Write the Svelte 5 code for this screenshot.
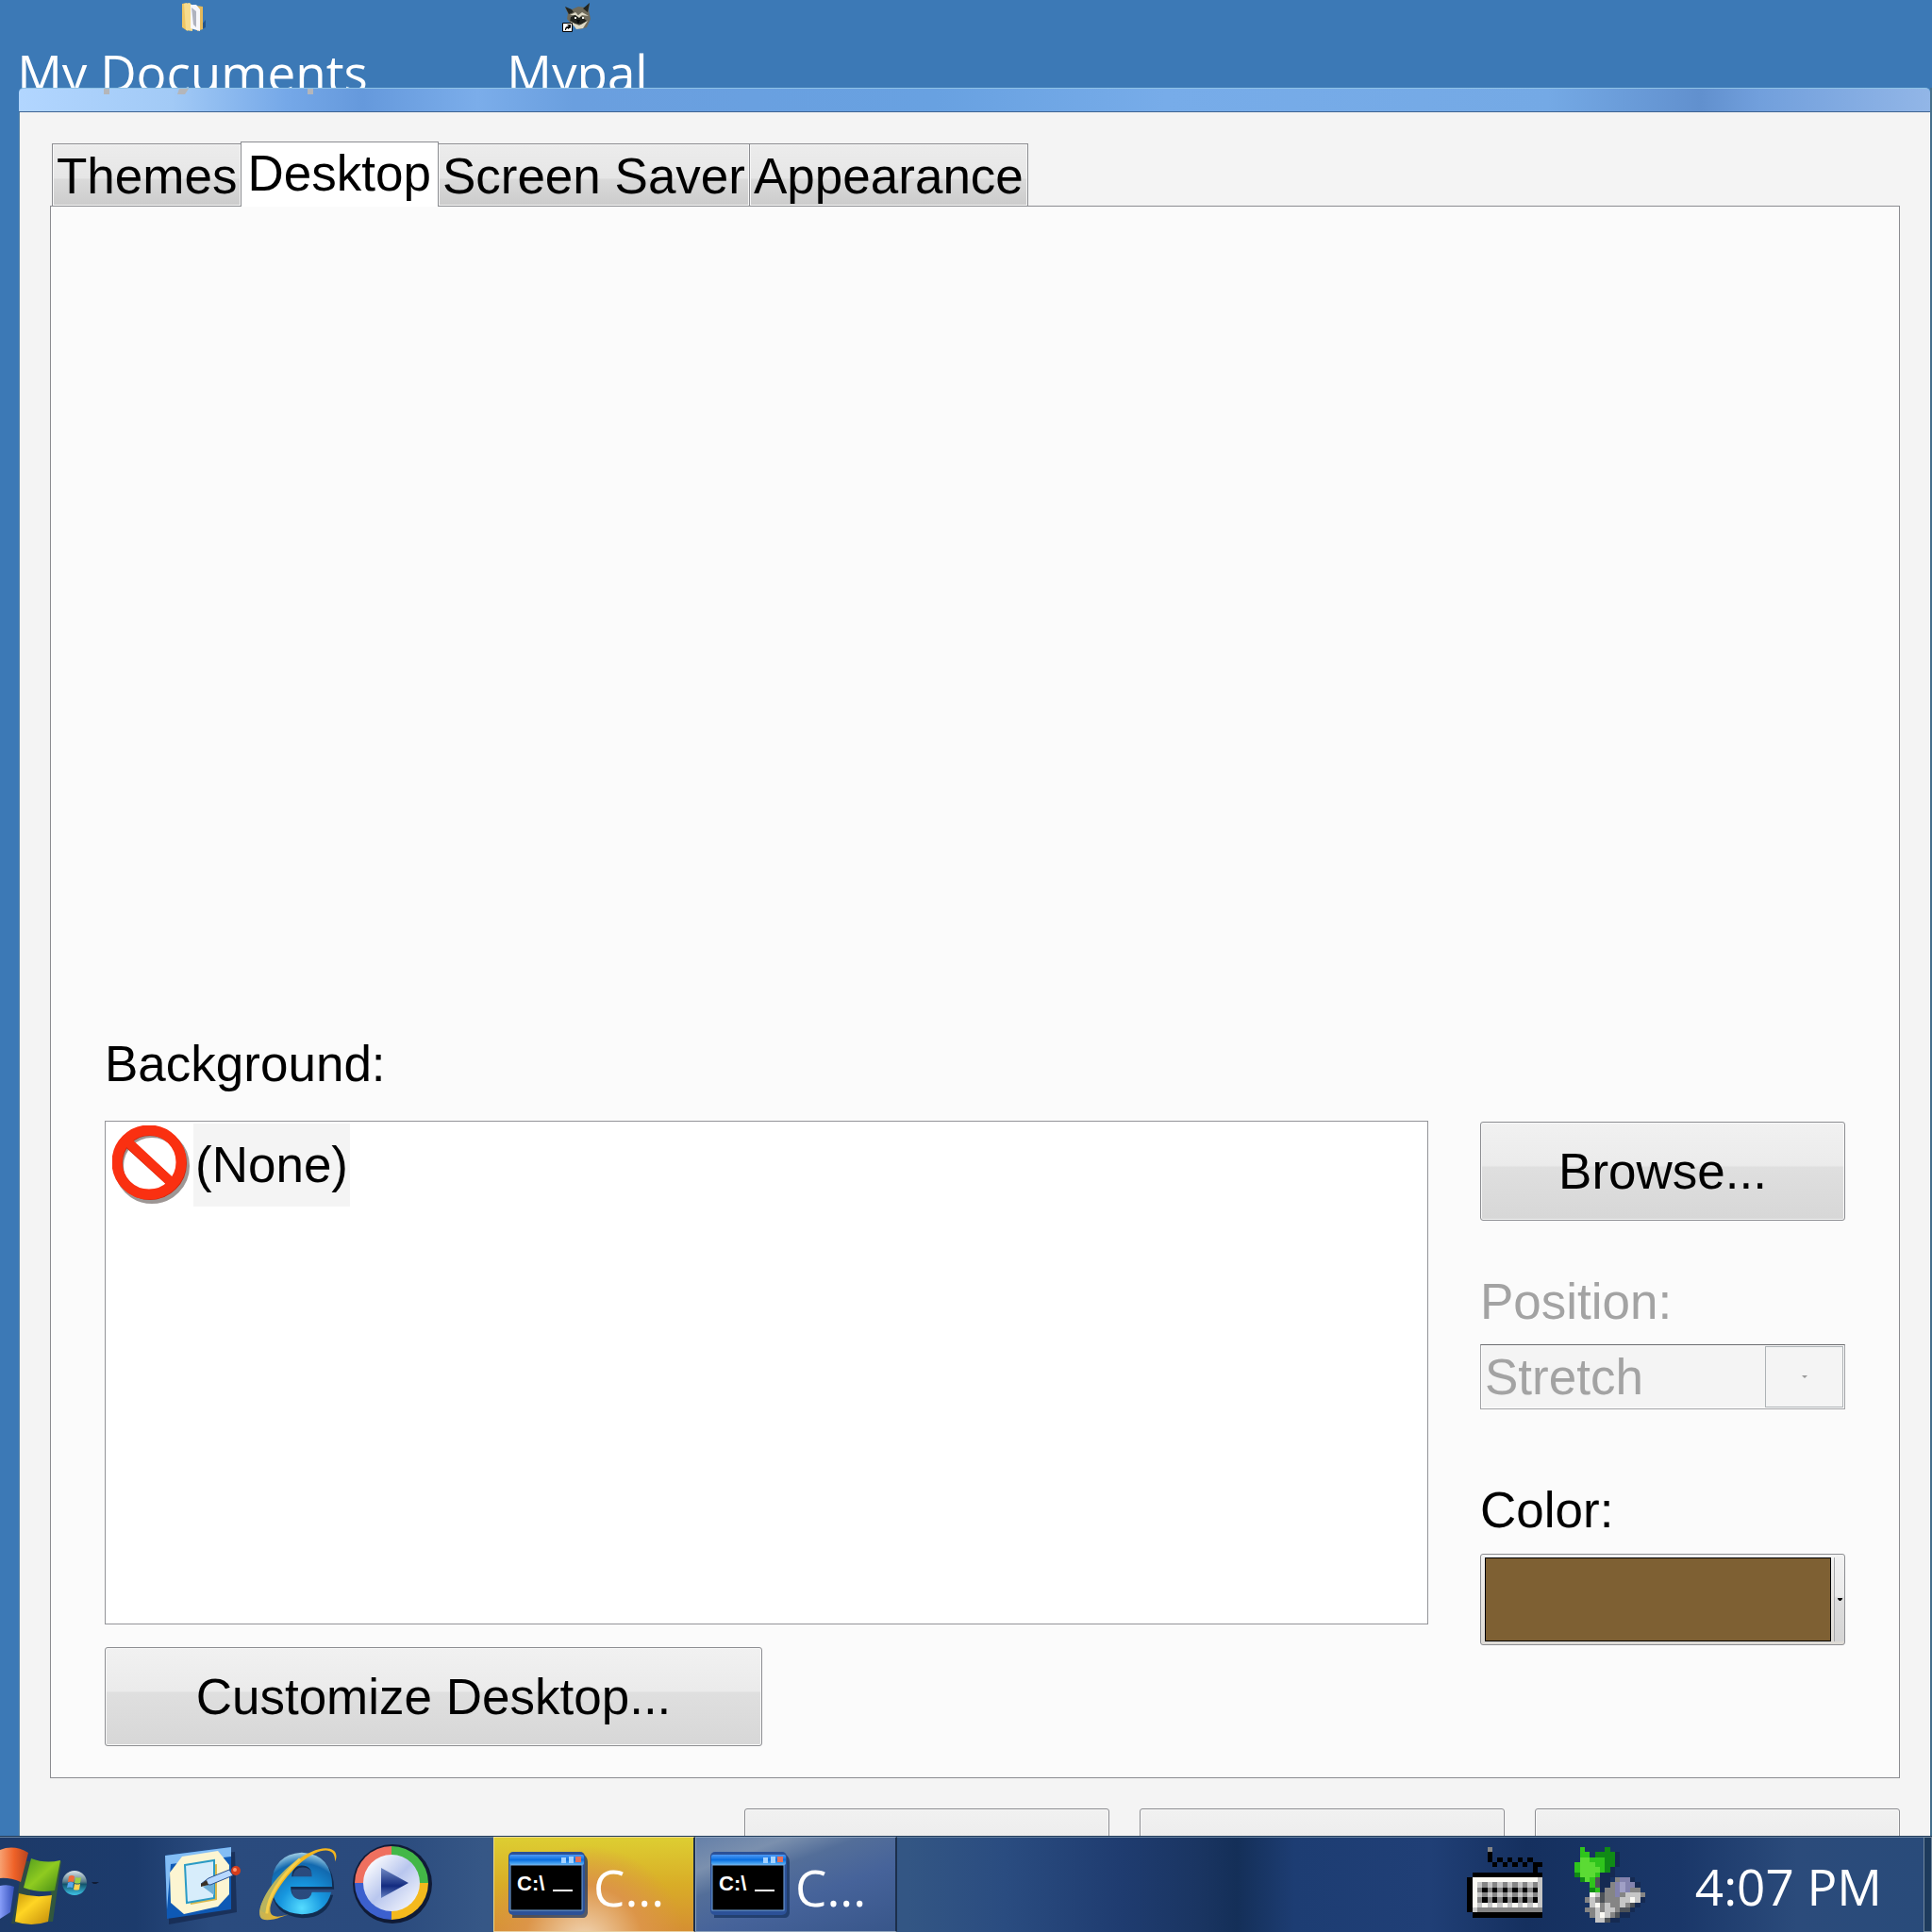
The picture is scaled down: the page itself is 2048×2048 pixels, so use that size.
<script>
    let tabs = ['Themes', 'Desktop', 'Screen Saver', 'Appearance'];
    let activeTab = $state('Desktop');
    let background = $state('(None)');
    let position = $state('Stretch');
    let color = $state('#7e6033');

    const tasks = [
        { id: 1, title: 'C...', flashing: true },
        { id: 2, title: 'C...', flashing: false }
    ];

    // 16 pixel tray icons, one character per pixel
    const keyboard = [
        '....g...........',
        '....k...........',
        '....k.k.k.k.k...',
        '.....k.k.k.k.kk.',
        '.............k..',
        '.kkkkkkkkkkkkkk.',
        'kwwwwwwwwwwwwwl.',
        'kwlglglglglglgl.',
        'kwgkgkgkgkgkgkl.',
        'kwlglglglglglgl.',
        'kwgkgkgkgkgkgkl.',
        'kwlwlwlwlwlwlwl.',
        'klggggggggggggg.',
        '.kkkkkkkkkkkkkk.'
    ];
    const device = [
        '.G....D.........',
        '.GG.DDDDn.......',
        '.HHGGGDDn.......',
        'GHHHGGDDn.......',
        'GHHHHGDn........',
        'DHHHGnnn........',
        '.DHGdnn.gppn....',
        '...Gdnngpqppn...',
        '...DGnggpqpgg...',
        '...wldggpglllg..',
        '..glgdgggllwln..',
        '...lwglgglgdn...',
        '..gglgllgddn....',
        '...glwlgdnn.....',
        '....lldnn.......'
    ];
    const palette = {
        k: '#000', w: '#fbfaf5', l: '#c6c6c6', g: '#858585',
        G: '#2fc41c', H: '#5bdb34', D: '#108a16', d: '#4d5258',
        p: '#8383ae', q: '#a0a0c6', n: '#152a52'
    };

    function toPixels(rows) {
        return rows.flatMap((row, y) =>
            [...row].map((key, x) => ({ x, y, fill: palette[key] })).filter((p) => p.fill)
        );
    }
</script>

{#snippet pixelIcon(rows, label)}
    <svg class="tray-icon" viewBox="0 0 16 15" shape-rendering="crispEdges" role="img" aria-label={label}>
        {#each toPixels(rows) as p}
            <rect x={p.x} y={p.y} width="1" height="1" fill={p.fill} />
        {/each}
    </svg>
{/snippet}

{#snippet consoleIcon(id)}
    <svg class="console-icon" viewBox="0 0 84 70" aria-hidden="true">
        <defs>
            <linearGradient id="bar{id}" x2="0" y2="1">
                <stop offset="0" stop-color="#4f9af5" />
                <stop offset=".5" stop-color="#0a6fe0" />
                <stop offset="1" stop-color="#62b8f8" />
            </linearGradient>
        </defs>
        <path d="M5 3h74q5 2 5 8v54q-1 5-5 5H4z" fill="#14305c" opacity=".7" />
        <rect width="81" height="67" rx="5" fill="#2c5197" />
        <rect x="1" y="3" width="79" height="11" rx="2" fill="url(#bar{id})" />
        <path d="M56 6h5v6h-5zM64 5h5v7h-5z" fill="#a5d3ff" />
        <rect x="71" y="5" width="6" height="6" fill="#e2705c" />
        <rect x="2" y="14" width="76" height="48" fill="#000" stroke="#74a6dc" />
        <text x="9" y="41" font-size="22">C:\</text>
        <path d="M47 41h21" stroke="#fff" stroke-width="2" />
    </svg>
{/snippet}

<div class="screen">
    <header class="icons">
        <a href="#documents" class="desktop-icon">
            <svg viewBox="0 0 28 32" aria-hidden="true">
                <path d="M22 26l6-7v8l-6 3z" fill="#24558c" />
                <path d="M3 2l5-1 1 30-6-4z" fill="#efc765" />
                <path d="M5 2l6-1 3 3v27L7 30z" fill="#f7dc8d" />
                <path d="M18 4l7 1v24l-6 2z" fill="#e4b95b" />
                <path d="M12 3h6l4 5v23l-10-3z" fill="#f7f7fb" />
                <path d="M13 6l5 4v17l-3-3z" fill="#b0b3bf" />
            </svg>
            <span>My Documents</span>
        </a>
        <a href="#mypal" class="desktop-icon">
            <svg viewBox="0 0 32 32" aria-hidden="true">
                <path d="M3 6l7 2 7-3 8 1 4-5-1 8 2 9-4 9-7 2-9-5-5-6 1-6z" fill="#6f6b5c" />
                <path d="M3 5l7 3 2 3-5 2zM22 7l7-6-2 10zM9 16l7-3 5 3 5 4-5 4-7-1-6-2z" fill="#22241f" />
                <path d="M8 14l6-3 3 3 4-3 7 4-7-1-3 3-4-3zM8 20l5 3 5 2 9-5-5 8-7 1z" fill="#ddd9c6" />
                <path d="M15 19h4l-2 5z" fill="#080b0d" />
                <path d="M13 16h2v2h-2zM21 16h2v2h-2z" fill="#f3f3ec" />
                <path d="M.5 22.5h10v9H.5z" fill="#fff" stroke="#000" />
                <path d="M3 30c0-3 1-4 3-4v-2l3 3-3 2v-1c-2 0-2 1-2 2zM5 24h4v4z" fill="#000" />
            </svg>
            <span>Mypal</span>
        </a>
    </header>

    <main class="window">
        <div class="titlebar">
            <svg class="residue" viewBox="0 0 230 6" aria-hidden="true">
                <path d="M2 0h6v6H2zM82 0h10l-4 6h-8zM218 0h6v6h-6z" fill="#b4b6ba" />
            </svg>
        </div>
        <div class="dialog">
            <div class="tabs" role="tablist">
                {#each tabs as tab}
                    <button
                        role="tab"
                        class="tab"
                        class:active={tab === activeTab}
                        aria-selected={tab === activeTab}
                        onclick={() => (activeTab = tab)}>{tab}</button>
                {/each}
            </div>

            <section class="panel">
                <div class="preview"></div>
                <div class="label" id="background-label">Background:</div>
                <div class="settings">
                    <div class="left">
                        <div class="list" role="listbox" aria-labelledby="background-label">
                            <button class="option" role="option" aria-selected={background === '(None)'} onclick={() => (background = '(None)')}>
                                <svg viewBox="0 0 84 84" aria-hidden="true">
                                    <g fill="none" stroke-width="10">
                                        <circle cx="42" cy="43" r="35" stroke="#3c2d2a" opacity=".5" />
                                        <path d="M18 20l44 40" stroke="#c92710" />
                                        <circle cx="40" cy="40" r="34" stroke="#c92710" />
                                        <circle cx="39" cy="39" r="34" stroke="#fa3011" stroke-width="11" />
                                        <path d="M16 17l46 43" stroke="#fa3011" />
                                    </g>
                                </svg>
                                <span>(None)</span>
                            </button>
                        </div>
                        <button class="push customize">Customize Desktop...</button>
                    </div>

                    <div class="side">
                        <button class="push">Browse...</button>
                        <label class="label disabled" for="position">Position:</label>
                        <div class="combo">
                            <select id="position" bind:value={position} disabled>
                                <option>Stretch</option>
                            </select>
                            <span class="combo-arrow">
                                <svg viewBox="0 0 6 3" width="6" height="3"><path d="M0 0h6L3 3z" fill="#999" /></svg>
                            </span>
                        </div>
                        <label class="label" for="color">Color:</label>
                        <button class="color" id="color">
                            <span class="swatch" style="background: {color}"></span>
                            <span class="color-arrow">
                                <svg viewBox="0 0 5 3" width="5" height="3"><path d="M0 0h5v1L3 3H2L0 1z" /></svg>
                            </span>
                        </button>
                    </div>
                </div>
            </section>

            <div class="actions">
                <button class="push" aria-label="OK"></button>
                <button class="push" aria-label="Cancel"></button>
                <button class="push" aria-label="Apply"></button>
            </div>
        </div>
    </main>

    <footer class="taskbar">
        <button class="start" aria-label="Start">
            <svg width="66" height="90" viewBox="0 0 66 90">
                <defs>
                    <linearGradient id="red"><stop stop-color="#f7a070" /><stop offset=".5" stop-color="#ef6228" /><stop offset="1" stop-color="#b8431f" /></linearGradient>
                    <linearGradient id="green" x2="1" y2="1"><stop stop-color="#4f9a1f" /><stop offset=".5" stop-color="#8fcb20" /><stop offset="1" stop-color="#458b16" /></linearGradient>
                    <linearGradient id="blue"><stop stop-color="#879df8" /><stop offset="1" stop-color="#3450bb" /></linearGradient>
                    <linearGradient id="yellow" x2="1" y2="1"><stop stop-color="#c9980a" /><stop offset=".4" stop-color="#ffd524" /><stop offset="1" stop-color="#c18909" /></linearGradient>
                </defs>
                <path d="M24 20h8v66H12l6-26z" fill="#3f5c22" opacity=".5" />
                <path d="M60 20h5l-9 64h-7z" fill="#3f6a22" opacity=".6" />
                <path d="M0 8q15-6 30 3L22 42Q10 37 0 38z" fill="url(#red)" />
                <path d="M33 17q15 6 31 2l-6 32q-17 3-33-3z" fill="url(#green)" />
                <path d="M0 46q8-2 15 1L11 74 0 81z" fill="url(#blue)" />
                <path d="M20 54q16 5 35 2l-4 28q-18 6-35 0z" fill="url(#yellow)" />
            </svg>
            <svg width="40" height="30" viewBox="0 0 40 30">
                <defs>
                    <linearGradient id="orb" x2="0" y2="1"><stop stop-color="#dbe6ea" /><stop offset=".45" stop-color="#587c8c" /><stop offset=".55" stop-color="#12536c" /><stop offset="1" stop-color="#3fc6e8" /></linearGradient>
                </defs>
                <circle cx="13" cy="13" r="13" fill="url(#orb)" />
                <path d="M7 6q3-2 6 0l-1 6q-3-1-6 0z" fill="#f06a3a" />
                <path d="M14 7q3 1 6 0l-1 6q-3 1-6 0z" fill="#9bd046" />
                <path d="M6 13q3-2 6 0l-1 5q-3-1-6 0z" fill="#57a7ec" />
                <path d="M13 14q3 1 6 0l-1 6q-3 1-6 0z" fill="#ffd24e" />
                <path d="M31 12h8l-3 2h-3z" fill="#101c35" />
            </svg>
        </button>

        <nav class="quick">
            <button aria-label="Show desktop">
                <svg viewBox="0 0 86 86">
                    <path d="M6 17l70-8 2 64-72 13z" fill="#14264c" opacity=".7" />
                    <path d="M2 13L72 4v66L4 80z" fill="#0e59b5" />
                    <path d="M2 13l70-9v10L8 22l-4 48z" fill="#83bdf5" />
                    <path d="M20 14l38-6 12 15v31L58 67l-36 8L8 63l-1-32z" fill="#fcf5d2" />
                    <path d="M26 26l31-4v38l-28 5z" fill="#d8b84c" />
                    <path d="M23 23l31-5v40l-29 5z" fill="#d7edfb" stroke="#2b9bc5" stroke-width="2" />
                    <path d="M42 46l12-5v14z" fill="#6eafd7" />
                    <path d="M40 43l8-6 22-9 4 6-24 10z" fill="#b7d8ff" stroke="#284e8c" stroke-width="1" />
                    <path d="M40 43l6-4 2 5-8 2z" fill="#392f23" />
                    <circle cx="77" cy="29" r="5" fill="#d53d1c" />
                    <circle cx="76" cy="28" r="2" fill="#ff9a75" />
                </svg>
            </button>
            <button aria-label="Internet Explorer">
                <svg viewBox="0 0 88 88">
                    <defs>
                        <radialGradient id="ie" cx=".5" cy=".9" r=".9"><stop stop-color="#55dcff" /><stop offset=".4" stop-color="#1797df" /><stop offset=".8" stop-color="#1269af" /><stop offset="1" stop-color="#a3d1e6" /></radialGradient>
                        <linearGradient id="orbit"><stop stop-color="#c3b35a" /><stop offset=".3" stop-color="#f3b71f" /><stop offset="1" stop-color="#f5b51c" /></linearGradient>
                    </defs>
                    <g id="letter" fill-rule="evenodd">
                        <path d="M82 48H36q0 13 12 13 9 0 11-7h22q-6 25-33 25-34-2-34-35 2-32 34-34 34 2 34 38zM37 36h22q0-12-11-12-10 0-11 12z" fill="#122c50" transform="translate(1 2)" />
                        <path d="M81 47H36q0 14 12 14 10 0 11-8h21q-6 24-32 24-33-2-33-33 2-32 33-34 33 2 33 37zM37 36h22q0-12-11-12-10 0-11 12z" fill="url(#ie)" />
                    </g>
                    <path d="M84 20C92 2 65-1 41 21 12 44-5 75 5 82q8 4 34-7-22 9-25 0C11 63 30 35 48 20 66 5 85 2 84 20z" fill="url(#orbit)" />
                    <path d="M3 73C5 50 36 20 52 12 30 28 14 52 9 76z" fill="#b9b45e" />
                    <path d="M10 76C12 52 32 30 46 17" fill="none" stroke="#f6cf4a" stroke-width="3" />
                </svg>
            </button>
            <button aria-label="Media Player">
                <svg viewBox="0 0 86 86">
                    <defs>
                        <linearGradient id="disc" x2="1" y2="1"><stop offset=".1" stop-color="#fff" /><stop offset=".5" stop-color="#b8c6ee" /><stop offset="1" stop-color="#fff" /></linearGradient>
                        <linearGradient id="play" x2="0" y2="1"><stop stop-color="#718ac4" /><stop offset=".6" stop-color="#132b80" /><stop offset="1" stop-color="#6480c1" /></linearGradient>
                    </defs>
                    <circle cx="43" cy="43" r="42" fill="#101b36" />
                    <path d="M3 42A39 39 0 0 1 42 3v39z" fill="#ef705f" />
                    <path d="M42 3a39 39 0 0 1 39 39H42z" fill="#43b747" />
                    <path d="M81 42a39 39 0 0 1-39 39V42z" fill="#f4b91d" />
                    <path d="M42 81A39 39 0 0 1 3 42h39z" fill="#3c60ce" />
                    <circle cx="42" cy="42" r="30" fill="url(#disc)" />
                    <path d="M31 26l29 16-29 16z" fill="url(#play)" />
                </svg>
            </button>
        </nav>

        <div class="tasks">
            {#each tasks as task (task.id)}
                <button class="task" class:flashing={task.flashing}>
                    {@render consoleIcon(task.id)}
                    <span>{task.title}</span>
                </button>
            {/each}
        </div>

        <div class="tray">
            {@render pixelIcon(keyboard, 'Keyboard')}
            {@render pixelIcon(device, 'Safely remove hardware')}
            <time>4:07 PM</time>
        </div>
        <button class="peek" aria-label="Peek at desktop"></button>
    </footer>
</div>

<style>
    :global(body) {
        margin: 0;
    }

    .screen {
        display: flex;
        flex-direction: column;
        height: 100vh;
        overflow: hidden;
        background: #3c79b6;
        font-family: 'Liberation Sans', Arial, sans-serif;
        font-size: 53px;
        line-height: 60px;
        color: #000;
    }

    button,
    select {
        box-sizing: border-box;
        margin: 0;
        padding: 0;
        border: 0;
        background: none;
        font: inherit;
        color: inherit;
    }

    svg {
        display: block;
        flex: none;
    }

    .icons {
        display: grid;
        grid-template-columns: 408px 408px;
        flex: none;
        height: 93px;
        overflow: hidden;
    }

    .desktop-icon {
        display: flex;
        flex-direction: column;
        align-items: center;
        color: #fff;
        text-decoration: none;
        font-family: 'Open Sans', 'Noto Sans', sans-serif;
        line-height: 72px;
        white-space: nowrap;
    }

    .desktop-icon svg {
        height: 32px;
        margin: 2px 0 7px;
    }

    .window {
        display: flex;
        flex-direction: column;
        flex: 1;
        min-height: 0;
        margin-left: 20px;
        border-right: 2px solid #456f8c;
    }

    .titlebar {
        position: relative;
        box-sizing: border-box;
        flex: none;
        height: 26px;
        border-top: 1px solid #8fc3e6;
        border-bottom: 1px solid #3e6391;
        border-radius: 5px 5px 0 0;
        background: linear-gradient(to right, #b2d6ff, #a2caf6 8%, #75a8e8 14%, #6599dc 18%, #7badea 24%, #6a9fdf 29%, #68a1e1 48%, #77ace9 60%, #74a9e5 80%, #6190ce 88%, #719fdc 91%, #92b6e7);
    }

    .residue {
        position: absolute;
        top: 0;
        left: 88px;
        width: 230px;
        height: 6px;
    }

    .dialog {
        display: flex;
        flex-direction: column;
        flex: 1;
        min-height: 0;
        padding: 31px 31px 0 32px;
        border-left: 1px solid #5d88a8;
        border-right: 1px solid #fff;
        background: #f4f4f4;
    }

    .tabs {
        display: flex;
        align-items: flex-end;
        padding-left: 2px;
    }

    .tab {
        height: 66px;
        padding: 4px 4px 1px;
        border: 1px solid #8b8c90;
        border-bottom: 0;
        margin-right: -1px;
        background: linear-gradient(#ececec, #e6e6e6 55%, #dadada 57%, #cccccc);
        box-shadow: inset 0 0 0 1px #f6f6f6;
        white-space: nowrap;
    }

    .tab.active {
        z-index: 1;
        height: 69px;
        margin-bottom: -1px;
        padding: 1px 7px 4px 6px;
        background: #fff;
        box-shadow: none;
    }

    .panel {
        display: flex;
        flex-direction: column;
        flex: 1;
        padding: 0 57px 33px;
        border: 1px solid #8b8c90;
        background: #fbfbfb;
    }

    .preview {
        flex: 1;
    }

    .label {
        display: block;
        height: 60px;
    }

    .disabled {
        margin-top: 56px;
        color: #a3a3a3;
    }

    .settings {
        display: grid;
        grid-template-columns: 1fr 387px;
        gap: 55px;
        margin-top: 30px;
    }

    .left {
        display: flex;
        flex-direction: column;
        align-items: flex-start;
        gap: 24px;
    }

    .list {
        box-sizing: border-box;
        align-self: stretch;
        min-height: 534px;
        padding: 2px 7px;
        border: 1px solid #939498;
        background: #fff;
    }

    .option {
        display: flex;
        align-items: center;
    }

    .option svg {
        width: 84px;
        height: 84px;
        margin-right: 2px;
    }

    .option span {
        padding: 14px 2px;
        background: #f4f4f4;
    }

    .push {
        height: 105px;
        border: 1px solid #8c8d91;
        border-radius: 3px;
        background: linear-gradient(#f1f1f1, #ebebeb 44%, #dfdfdf 46%, #d7d7d7);
        box-shadow: inset 0 0 0 1px #f8f8f8;
    }

    .customize {
        width: 697px;
    }

    .side {
        display: flex;
        flex-direction: column;
        padding-top: 1px;
    }

    .combo {
        position: relative;
        margin-top: 15px;
        margin-bottom: 77px;
    }

    .combo select {
        display: block;
        width: 100%;
        height: 69px;
        padding: 0 4px;
        appearance: none;
        border: 1px solid #a2a3a6;
        border-top-color: #66676a;
        background: #f4f4f4;
        box-shadow: inset 0 0 0 1px #fdfdfd;
        color: #a3a3a3;
        opacity: 1;
    }

    .combo-arrow {
        position: absolute;
        box-sizing: border-box;
        top: 2px;
        right: 2px;
        bottom: 2px;
        width: 83px;
        display: grid;
        place-items: center;
        border: 1px solid #adb2b5;
        background: #f4f4f4;
    }

    .color {
        display: flex;
        height: 97px;
        margin-top: 16px;
        padding: 3px 0 3px 4px;
        border: 1px solid #8c8d91;
        border-radius: 3px;
        background: linear-gradient(#f3f3f3, #e9e6e2 50%, #dedbd6);
    }

    .swatch {
        flex: 1;
        border: 1px solid #000;
    }

    .color-arrow {
        display: grid;
        place-items: center;
        width: 10px;
        margin-left: 3px;
        border-left: 1px solid #a6a7aa;
        background: linear-gradient(#f1f1f1, #ebebeb 46%, #dddddd 48%, #d5d5d5);
    }

    .actions {
        display: grid;
        grid-template-columns: repeat(3, 387px);
        justify-content: end;
        flex: none;
        gap: 32px;
        height: 29px;
        margin-top: 32px;
        overflow: hidden;
    }

    .taskbar {
        display: flex;
        box-sizing: border-box;
        flex: none;
        height: 102px;
        border-top: 1px solid #213c5c;
        box-shadow: inset 0 1px #67829f;
        background: linear-gradient(to right, #1d3a69, #1c3b6c 7%, #2a4b7e 11%, #2a4a7d 20%, #365786 25%, #335684 47%, #2a4c80 52%, #1f3c70 58%, #1a3562 62%, #142f58 64%, #1d3d73 67%, #203f76 74%, #15305f 79%, #1a3769 87%, #2b4b7b 93%, #294b7a);
        font-family: 'Open Sans', 'Noto Sans', sans-serif;
        color: #fff;
    }

    .start {
        display: flex;
        align-items: center;
        width: 173px;
    }

    .quick {
        display: flex;
        align-items: center;
        gap: 14px;
        width: 350px;
        padding-bottom: 2px;
    }

    .quick svg {
        width: 86px;
        height: 86px;
    }

    .tasks {
        display: flex;
        flex: 1;
    }

    .task {
        display: flex;
        align-items: center;
        gap: 6px;
        width: 214px;
        padding: 0 15px;
        border: 1px solid #8da3bd;
        border-right: 2px solid #1c2f4b;
        background: linear-gradient(160deg, #6580a9, #7b90ae 20%, #536e99 36%, #46639a 60%, #38568a);
    }

    .task.flashing {
        border-color: #ecd98c #1c2f4b #e9d0a0 #ecd98c;
        background: radial-gradient(ellipse at 45% 110%, #f1d6b6, #dc9548 38%, transparent 65%), linear-gradient(#ddce32, #d9ad27 50%, #d58f32);
    }

    .task span {
        padding-top: 6px;
    }

    .console-icon {
        width: 84px;
        height: 70px;
    }

    .console-icon text {
        font-family: 'Liberation Sans', Arial, sans-serif;
        font-weight: bold;
        fill: #fff;
    }

    .tray {
        display: flex;
        align-items: center;
        gap: 28px;
        padding-right: 44px;
    }

    .tray-icon {
        width: 86px;
        height: 80px;
    }

    .tray time {
        padding: 4px 0 0 14px;
        white-space: nowrap;
    }

    .peek {
        width: 9px;
        border: 1px solid #71889d;
        background: #1d3b5c;
    }
</style>
